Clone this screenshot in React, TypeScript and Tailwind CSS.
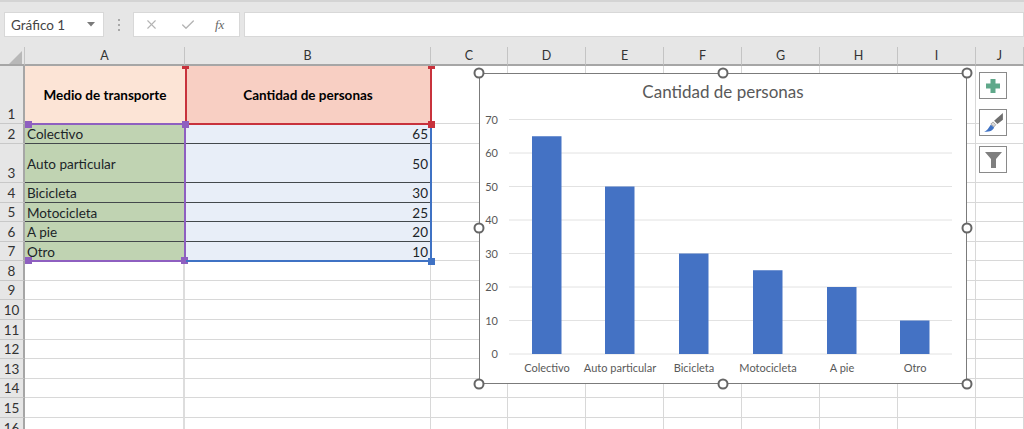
import { Check, X } from "lucide-react";

const columns = ["A", "B", "C", "D", "E", "F", "G", "H", "I", "J"];
const rowHeights = [58, 20, 39, 20, 19, 20, 19, 20, 19, 20, 20, 19, 20, 19, 20, 20];

const data: [string, number][] = [
  ["Colectivo", 65],
  ["Auto particular", 50],
  ["Bicicleta", 30],
  ["Motocicleta", 25],
  ["A pie", 20],
  ["Otro", 10],
];

const barLeft = [53, 126, 200, 274, 348, 421];
const handles = [
  [0, 0],
  [244, 0],
  [488, 0],
  [0, 155],
  [488, 155],
  [0, 311],
  [244, 311],
  [488, 311],
];

function Handle({ color, className }: { color: string; className: string }) {
  return <div className={`absolute h-[7px] w-[7px] ${color} ${className}`} />;
}

function Chart() {
  const zero = 281;
  const step = 3.35;
  return (
    <div className="absolute left-[479px] top-[73px] h-[311px] w-[488px] border border-[#7b7b7b] bg-white">
      <svg width="488" height="311" className="absolute -left-px -top-px">
        <text x="244" y="25" textAnchor="middle" fontSize="17" fill="#595959" fontFamily="Lato, sans-serif">
          Cantidad de personas
        </text>
        {[0, 10, 20, 30, 40, 50, 60, 70].map((v) => (
          <g key={v}>
            <line x1="30" x2="473" y1={zero - v * step} y2={zero - v * step} stroke="#e2e2e2" />
            <text x="19" y={zero - v * step + 4} textAnchor="end" fontSize="11" fill="#595959" fontFamily="Lato, sans-serif">
              {v}
            </text>
          </g>
        ))}
        {data.map(([label, value], i) => (
          <g key={label}>
            <rect x={barLeft[i]} y={zero - value * step} width="29.5" height={value * step} fill="#4472c4" />
            <text x={barLeft[i] + 15} y="299" textAnchor="middle" fontSize="11" fill="#595959" fontFamily="Lato, sans-serif">
              {label}
            </text>
          </g>
        ))}
      </svg>
      {handles.map(([x, y]) => (
        <div
          key={`${x}-${y}`}
          className="absolute h-[11px] w-[11px] -translate-x-1/2 -translate-y-1/2 rounded-full border-2 border-[#666666] bg-white"
          style={{ left: x - 1, top: y - 1 }}
        />
      ))}
    </div>
  );
}

function ChartButton({ children }: { children: React.ReactNode }) {
  return (
    <div className="flex h-[27px] w-[28px] items-center justify-center border border-[#8a8a8a] bg-white">
      {children}
    </div>
  );
}

export default function App() {
  return (
    <div className="relative h-[429px] w-[1024px] overflow-hidden bg-white font-['Lato',sans-serif] text-[13.5px] leading-[16px] text-[#1b2428]">
      <div className="flex h-[47px] items-start border-t-2 border-[#d4d4d4] bg-[#e6e6e6] pt-[10px]">
        <div className="ml-1 flex h-[25px] w-[100px] items-center justify-between border border-[#d8d8d8] bg-white pl-[6px] pr-2 text-[#444]">
          <span className="text-[13.5px]">Gráfico 1</span>
          <svg width="8" height="5" viewBox="0 0 8 5">
            <path d="M0 0h8L4 4.5z" fill="#7a7a7a" />
          </svg>
        </div>
        <div className="ml-[14px] mt-[7px] flex w-[2px] flex-col gap-[3px]">
          <div className="h-[2px] w-[2px] bg-[#a8a8a8]" />
          <div className="h-[2px] w-[2px] bg-[#a8a8a8]" />
          <div className="h-[2px] w-[2px] bg-[#a8a8a8]" />
        </div>
        <div className="ml-[13px] flex h-[25px] w-[107px] items-center border border-[#d8d8d8] bg-white pl-[10px]">
          <X size={15} strokeWidth={1.8} color="#b4b4b4" />
          <Check size={16} strokeWidth={2} color="#b4b4b4" className="ml-[21px]" />
          <span className="ml-[19px] font-['Liberation_Serif',serif] text-[13px] italic text-[#666]">fx</span>
        </div>
        <div className="ml-1 h-[25px] flex-1 border border-[#d8d8d8] bg-white" />
      </div>

      <div className="grid grid-cols-[25px_160px_246px_77px_78px_78px_78px_78px_78px_78px_1fr]">
        <div className="relative h-[19px] border-b-2 border-r border-b-[#a6a6a6] border-r-[#c4c4c4] bg-[#e6e6e6]">
          <svg width="14" height="13" className="absolute left-[9px] top-[4px]">
            <path d="M13 0v13H0z" fill="#b8b8b8" />
          </svg>
        </div>
        {columns.map((c) => (
          <div
            key={c}
            className="flex h-[19px] items-center justify-center border-b-2 border-r border-b-[#a6a6a6] border-r-[#c4c4c4] bg-[#e6e6e6] pt-px text-[12.5px] text-[#333]"
          >
            {c}
          </div>
        ))}

        {rowHeights.map((h, r) => {
          const row = data[r - 1];
          const isData = r >= 1 && r <= 6;
          return (
            <div key={r} className="col-span-full grid grid-cols-subgrid" style={{ height: h }}>
              <div className="flex items-end justify-center border-b border-r-2 border-b-[#c8c8c8] border-r-[#a6a6a6] bg-[#e6e6e6] text-[13.5px] leading-[17px] text-[#333]">
                {r + 1}
              </div>
              {r === 0 && (
                <>
                  <div className="flex items-center justify-center bg-[#fce4d6] text-[13.5px] font-bold text-black">
                    Medio de transporte
                  </div>
                  <div className="flex items-center justify-center bg-[#f8cfc3] text-[13.5px] font-bold text-black">
                    Cantidad de personas
                  </div>
                </>
              )}
              {isData && row && (
                <>
                  <div className="flex items-center border-b border-[#43484c] bg-[#c0d3b2] pl-[2px] pt-px">{row[0]}</div>
                  <div className="flex items-center justify-end border-b border-[#43484c] bg-[#e8eef8] pr-[3px] pt-px">
                    {row[1]}
                  </div>
                </>
              )}
              {!isData && r !== 0 && (
                <>
                  <div className="border-b border-r-2 border-b-[#d8d8d8] border-r-[#dddddd]" />
                  <div className="border-b border-r border-[#d8d8d8]" />
                </>
              )}
              {columns.slice(2).map((c) => (
                <div key={c} className="border-b border-r border-[#d8d8d8]" />
              ))}
            </div>
          );
        })}
      </div>

      {/* range highlights */}
      <div className="absolute left-[25px] top-[123px] h-[139px] w-[161px] border-x-2 border-y-2 border-x-[#8e5fc0] border-y-[#8e5fc0] border-l-transparent">
        <Handle color="bg-[#8e5fc0]" className="-left-[2px] -top-[4px] w-[3px]" />
        <Handle color="bg-[#8e5fc0]" className="-bottom-[4px] -left-[2px] w-[3px]" />
        <Handle color="bg-[#8e5fc0]" className="-bottom-[4px] -right-[4px]" />
      </div>
      <div className="absolute left-[185px] top-[66px] h-[59px] w-[247px] border-x-2 border-b-2 border-[#c8323c]" />
      <div className="absolute left-[186px] top-[125px] h-[137px] w-[246px] border-b-2 border-r-2 border-[#3f72c4]" />
      <Handle color="bg-[#8e5fc0]" className="left-[182px] top-[121px]" />
      <Handle color="bg-[#c8323c]" className="left-[428px] top-[121px]" />
      <Handle color="bg-[#3f72c4]" className="left-[428px] top-[258px]" />
      <div className="absolute left-[182px] top-[66px] h-[3px] w-[7px] bg-[#c8323c]" />
      <div className="absolute left-[428px] top-[66px] h-[3px] w-[7px] bg-[#c8323c]" />

      <Chart />

      <div className="absolute left-[979px] top-[72px] flex flex-col gap-[10px]">
        <ChartButton>
          <svg width="16" height="16" viewBox="0 0 16 16">
            <path d="M5.5 1h5v4.500H15v5h-4.500V15h-5v-4.500H1v-5h4.500z" fill="#5fa88a" />
          </svg>
        </ChartButton>
        <ChartButton>
          <svg width="22" height="22" viewBox="0 0 20 20">
            <path d="M19 1v6l-5 4-3-3z" fill="#6e6e6e" />
            <path d="M10 9l2.500 2.500-1.500 2-3-2.500z" fill="#d8d8d8" stroke="#8a8a8a" strokeWidth="0.6" />
            <path d="M8 11.500l3 2.500c-1 2.500-3 4-9 4 2.500-1 4-3.500 6-6.500z" fill="#3f72c4" />
          </svg>
        </ChartButton>
        <ChartButton>
          <svg width="19" height="19" viewBox="0 0 19 19">
            <path d="M1 2h17l-6 7v9h-5V9z" fill="#7f7f7f" />
          </svg>
        </ChartButton>
      </div>
    </div>
  );
}
